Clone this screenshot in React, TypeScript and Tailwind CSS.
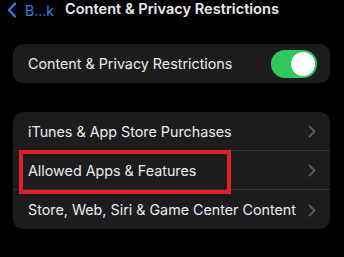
import React from "react";

function Chevron() {
  return (
    <svg width="8" height="13" viewBox="0 0 8 13" className="shrink-0">
      <path d="M1.5 1.5 L6.5 6.5 L1.5 11.5" fill="none" stroke="#5b5b5f" strokeWidth="1.8" strokeLinecap="round" strokeLinejoin="round" />
    </svg>
  );
}

export default function App() {
  const font = { fontFamily: "Inter, 'Liberation Sans', sans-serif" };
  return (
    <div className="w-[344px] h-[257px] bg-black overflow-hidden text-[#ececec]" style={font}>
      <div className="flex items-center h-[20px] pl-[7px]">
        <svg width="10" height="16" viewBox="0 0 10 16" className="shrink-0">
          <path d="M8 1.5 L2 8 L8 14.5" fill="none" stroke="#2f82e0" strokeWidth="2.2" strokeLinecap="round" strokeLinejoin="round" />
        </svg>
        <span className="ml-[8px] text-[14px] text-[#2f82e0] whitespace-nowrap">B...k</span>
        <span className="ml-[11px] text-[14.6px] font-semibold text-[#ececec] whitespace-nowrap">Content &amp; Privacy Restrictions</span>
      </div>
      <div className="mx-[13px] mt-[24px] w-[317px] h-[39px] rounded-[10px] bg-[#1c1c1e] flex items-center pl-[15px] pr-[13px]">
        <span className="text-[14.3px] flex-1 whitespace-nowrap">Content &amp; Privacy Restrictions</span>
        <div className="w-[46px] h-[28px] rounded-full bg-[#30c85a] flex items-center justify-end pr-[2px]">
          <div className="w-[24px] h-[24px] rounded-full bg-white" />
        </div>
      </div>
      <div className="mx-[13px] mt-[29px] w-[317px] rounded-[10px] bg-[#1c1c1e] flex flex-col">
        <div className="h-[39px] flex items-center pl-[15px] pr-[14px] pt-[1px] border-b border-[#333336]">
          <span className="text-[14.3px] flex-1 whitespace-nowrap">iTunes &amp; App Store Purchases</span>
          <Chevron />
        </div>
        <div className="relative h-[39px] flex items-center pl-[15px] pr-[14px] pt-[1px] border-b border-[#333336]">
          <span className="text-[14.3px] flex-1 whitespace-nowrap">Allowed Apps &amp; Features</span>
          <Chevron />
          <div className="absolute left-[6px] top-[-1px] w-[212px] h-[44px] border-[4px] border-[#e0202a]" />
        </div>
        <div className="h-[39px] flex items-center pl-[15px] pr-[14px] pt-[1px]">
          <span className="text-[14.3px] flex-1 whitespace-nowrap">Store, Web, Siri &amp; Game Center Content</span>
          <Chevron />
        </div>
      </div>
    </div>
  );
}
